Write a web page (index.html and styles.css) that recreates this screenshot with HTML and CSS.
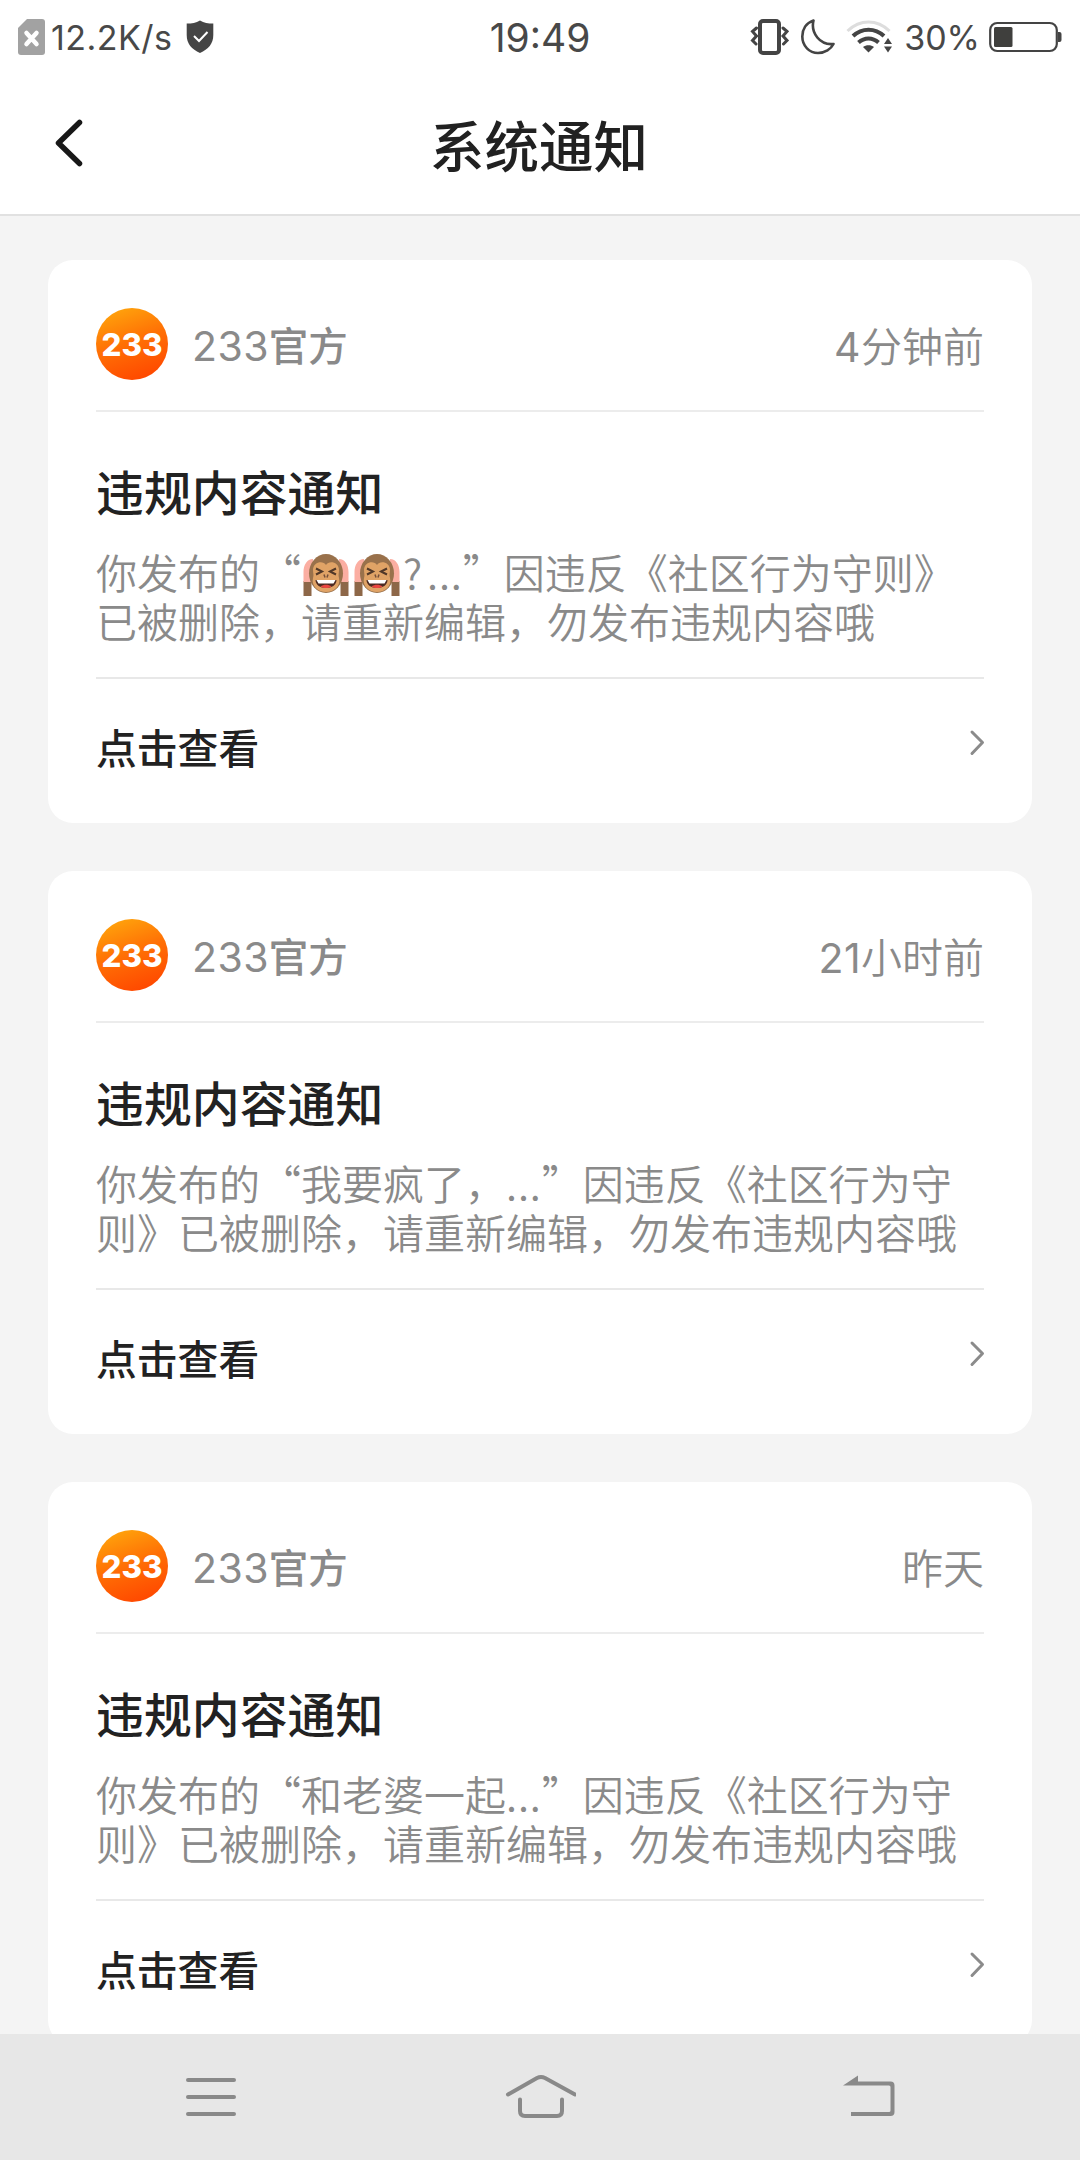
FILE: index.html
```html
<!DOCTYPE html>
<html lang="zh-CN">
<head>
<meta charset="utf-8">
<title>系统通知</title>
<link rel="stylesheet" href="styles.css">
</head>
<body>
<svg class="defs" width="0" height="0" aria-hidden="true">
  <defs>
    <linearGradient id="orange" x1="0.2" y1="0" x2="0.55" y2="1">
      <stop offset="0" stop-color="#ffa60c"/><stop offset="0.5" stop-color="#ff7005"/><stop offset="1" stop-color="#ff4a00"/>
    </linearGradient>
    <symbol id="logo" viewBox="0 0 72 72">
      <circle cx="36" cy="36" r="36" fill="url(#orange)"/>
      <text class="logo-text" x="5.500" y="47.500" textLength="61" lengthAdjust="spacingAndGlyphs">233</text>
    </symbol>
    <symbol id="chevron" viewBox="0 0 18 30">
      <path d="M4 4 14.5 14.5 4 25.500" fill="none" stroke="#8b8b8b" stroke-width="3" stroke-linecap="round" stroke-linejoin="round"/>
    </symbol>
    <symbol id="monkey" viewBox="0 0 46 44">
      <path d="M.5 43V28h8v15zM37.500 43V28h8v15z" fill="#8d6748"/>
      <path d="M.5 29V19C.5 12 4 6 10 6v23zM45.500 29V19c0-7-3.500-13-9.500-13v23z" fill="#fbaea2"/>
      <ellipse cx="23" cy="20.500" rx="17" ry="19.500" fill="#99714b"/>
      <path d="M23 12c3-5 13-3 13 5 0 3-1 5 0 8 2 8-5 14-13 14S8 33 10 25c1-3 0-5 0-8 0-8 10-10 13-5z" fill="#e0a366"/>
      <path d="M13 15.500l6 3-6 3M33 15.500l-6 3 6 3" fill="none" stroke="#513828" stroke-width="2"/>
      <path d="M21 21.500l1 3M25 21.500l-1 3" stroke="#76503a" stroke-width="1.500"/>
      <path d="M12.500 27h21c0 5-5 8-10.500 8s-10.500-3-10.500-8z" fill="#4c2a22"/>
      <path d="M13.500 27h19l-2 3.500h-15z" fill="#fff"/>
      <path d="M17.500 33.500c3-2.500 8-2.500 11 0-3 2-8 2-11 0z" fill="#ea4640"/>
    </symbol>
  </defs>
</svg>
<div class="screen">
  <div class="status">
    <div class="status-left">
      <svg width="27" height="36" viewBox="0 0 27 36"><path d="M9 0h15a3 3 0 0 1 3 3v30a3 3 0 0 1-3 3H3a3 3 0 0 1-3-3V9z" fill="#a2a2a2"/><path d="M8.500 14l10 11M18.500 14l-10 11" stroke="#fff" stroke-width="4.500" stroke-linecap="round"/></svg>
      <span class="speed">12.2K/s</span>
      <svg width="28" height="34" viewBox="0 0 28 34"><path d="M14 .5C18 3 22 3.500 27.300 3.500V15c0 9-5 14-13.300 18C5.700 29 .7 24 .7 15V3.500C6 3.500 10 3 14 .5z" fill="#454545"/><path d="M8 16l5 5 8.500-9" fill="none" stroke="#fff" stroke-width="2"/></svg>
    </div>
    <div class="time">19:49</div>
    <div class="status-right">
      <svg width="40" height="36" viewBox="0 0 40 36"><rect x="10" y="2" width="19" height="32" rx="3" fill="none" stroke="#444" stroke-width="4"/><path d="M6.500 9 2.500 12.500 6.500 17 2.500 21.500 6 25M33 9l4 3.500-4 4.500 4 4.500-3.500 3.500" fill="none" stroke="#444" stroke-width="3" stroke-linecap="round"/></svg>
      <svg class="moon" width="34" height="36" viewBox="0 0 34 36"><path d="M12.500 1.500C5 4 1.300 10.500 1.300 17.500 1.300 27 8.500 34 17 34c7 0 13-4 15.500-9C19 26.500 9.500 14 12.500 1.500z" fill="none" stroke="#444" stroke-width="2.600" stroke-linejoin="round"/></svg>
      <svg class="wifi" width="48" height="36" viewBox="0 0 48 36"><g fill="none" stroke="#444" stroke-width="4"><path d="M1.500 12C14 0 31 0 43.500 12" stroke="#ddd" stroke-width="3"/><path d="M7 17c9-8.500 22-8.500 31 0"/><path d="M12.500 23.500c6-5.500 14-5.500 20 0"/></g><path d="M17 28c3-2.500 8-2.500 11 0l-5.500 5.500z" fill="#444"/><path d="M42 19l4 6h-8zM42 33.500l4-6h-8z" fill="#444"/></svg>
      <span class="pct">30%</span>
      <svg class="battery" width="73" height="32" viewBox="0 0 73 32"><rect x="1.200" y="2" width="66.600" height="28" rx="7" fill="none" stroke="#444" stroke-width="2.200"/><rect x="5" y="6" width="18.500" height="20" rx="1.500" fill="#3f3f3d"/><path d="M69 11h1.500q2 0 2 2v6q0 2-2 2H69z" fill="#444"/></svg>
    </div>
  </div>
  <header class="bar">
    <svg class="back" width="30" height="50" viewBox="0 0 30 50"><path d="M25.500 4.500 4.500 25 25.500 45.500" fill="none" stroke="#181818" stroke-width="5.500" stroke-linecap="round" stroke-linejoin="round"/></svg>
    <h1 class="heading">系统通知</h1>
  </header>
  <main class="list">
    <article class="card">
      <div class="card-top"><svg class="logo" width="72" height="72"><use href="#logo"/></svg><span class="name"><span class="num">233</span>官方</span><span class="when"><span class="num">4</span>分钟前</span></div>
      <h2 class="title">违规内容通知</h2>
      <p class="text">你发布的“<svg class="emoji" width="46" height="44"><use href="#monkey"/></svg><svg class="emoji" width="46" height="44"><use href="#monkey"/></svg><span class="q">?</span><span class="dots">...</span>”因违反《社区行为守则》<br>已被删除，请重新编辑，勿发布违规内容哦</p>
      <div class="more"><span>点击查看</span><svg class="chev" width="18" height="30"><use href="#chevron"/></svg></div>
    </article>
    <article class="card">
      <div class="card-top"><svg class="logo" width="72" height="72"><use href="#logo"/></svg><span class="name"><span class="num">233</span>官方</span><span class="when"><span class="num">21</span>小时前</span></div>
      <h2 class="title">违规内容通知</h2>
      <p class="text">你发布的“我要疯了，<span class="dots">...</span>”因违反《社区行为守<br>则》已被删除，请重新编辑，勿发布违规内容哦</p>
      <div class="more"><span>点击查看</span><svg class="chev" width="18" height="30"><use href="#chevron"/></svg></div>
    </article>
    <article class="card">
      <div class="card-top"><svg class="logo" width="72" height="72"><use href="#logo"/></svg><span class="name"><span class="num">233</span>官方</span><span class="when">昨天</span></div>
      <h2 class="title">违规内容通知</h2>
      <p class="text">你发布的“和老婆一起<span class="dots">...</span>”因违反《社区行为守<br>则》已被删除，请重新编辑，勿发布违规内容哦</p>
      <div class="more"><span>点击查看</span><svg class="chev" width="18" height="30"><use href="#chevron"/></svg></div>
    </article>
  </main>
  <nav class="nav">
    <svg width="52" height="48" viewBox="0 0 52 48"><path d="M3 7h46M3 24h46M3 41h46" stroke="#898989" stroke-width="4" stroke-linecap="round"/></svg>
    <svg width="72" height="48" viewBox="0 0 72 48"><g fill="none" stroke="#898989" stroke-width="4" stroke-linecap="round" stroke-linejoin="round"><path d="M4 21.500 33 5q4-2 8 0L71 21.500"/><path d="M16 26.500V38q0 5 5 5h32q5 0 5-5V26.500"/></g></svg>
    <svg width="54" height="48" viewBox="0 0 54 48"><path d="M0 12.500 15 2.500V8.500h32.500q4 0 4 4v26.500q0 4-4 4H8v-4h38q1.500 0 1.500-1.500V14q0-1.500-1.500-1.500z" fill="#898989"/></svg>
  </nav>
</div>
</body>
</html>
```
FILE: styles.css
```css
* { box-sizing: border-box; }
body { margin: 0; background: #f4f4f4; font-family: "Noto Sans CJK SC", sans-serif; }
svg { display: block; flex: none; }
.defs { position: absolute; }
.screen { width: 1080px; height: 2160px; display: flex; flex-direction: column; overflow: hidden; }

.status { height: 74px; flex: none; background: #fff; display: grid; grid-template-columns: 1fr auto 1fr; align-items: center; padding: 0 18px; color: #484848; font-family: Inter, sans-serif; font-size: 34px; }
.status-left, .status-right { display: flex; align-items: center; }
.status-right { justify-content: flex-end; }
.speed { margin: 1px 14px 0 6px; letter-spacing: 0.450px; }
.time { font-size: 39px; }
.moon { margin-left: 11px; }
.wifi { margin-left: 11px; }
.pct { margin: 1px 9px 0 10px; }

.bar { height: 142px; flex: none; background: #fff; border-bottom: 2px solid #e1e1e1; display: grid; grid-template-columns: 1fr auto 1fr; align-items: center; padding: 0 53px 0 54px; }
.back { margin-top: -2px; }
.heading { margin: 0 3px 0 0; grid-column: 2; font-size: 54.500px; line-height: 80px; font-weight: 500; color: #212121; }

.list { flex: 1; min-height: 0; overflow: hidden; padding: 44px 48px 0; display: flex; flex-direction: column; gap: 48px; }
.card { height: 563px; flex: none; background: #fff; border-radius: 25px; padding: 0 48px; display: flex; flex-direction: column; }
.card-top { height: 152px; flex: none; border-bottom: 2px solid #ececec; display: flex; align-items: center; padding-top: 17px; color: #8a8a8a; }
.logo { margin-top: 1px; }
.name { margin-left: 24px; font-size: 39.500px; font-weight: 500; }
.when { margin-left: auto; font-size: 41px; font-weight: 350; }
.num { font-family: Inter, sans-serif; font-size: 41px; font-weight: 400; letter-spacing: 0.400px; }
.title { margin: 0; padding-top: 42px; font-size: 47.900px; line-height: 72px; font-weight: 500; color: #222; }
.text { margin: 0; padding-top: 21px; height: 153px; border-bottom: 2px solid #e8e8e8; font-size: 41px; line-height: 48.500px; font-weight: 350; color: #8a8a8a; white-space: nowrap; }
.dots { letter-spacing: 0.900px; }
.q { display: inline-block; width: 24px; }
.emoji { display: inline-block; vertical-align: -2px; margin: -12px 3px -12px 2px; position: relative; top: -6px; }
.more { flex: 1; display: flex; justify-content: space-between; padding-top: 38px; font-size: 40.800px; line-height: 60px; font-weight: 500; color: #222; }
.chev { margin: 11px -2px 0 0; }
.logo-text { font-family: Inter, sans-serif; font-size: 31px; font-weight: 800; fill: #fff; }

.nav { height: 126px; flex: none; background: #e7e7e7; display: flex; justify-content: space-between; padding: 39px 183px 0 185px; }
```
